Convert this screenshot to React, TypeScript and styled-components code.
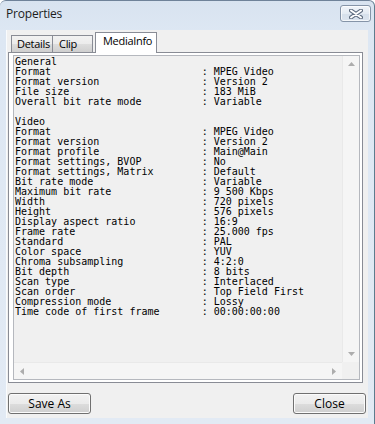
import React from "react";
import styled, { createGlobalStyle } from "styled-components";

const GlobalStyle = createGlobalStyle`
  html, body {
    margin: 0;
    padding: 0;
    background: #ffffff;
  }
  * {
    box-sizing: border-box;
  }
`;

const general: [string, string][] = [
  ["Format", "MPEG Video"],
  ["Format version", "Version 2"],
  ["File size", "183 MiB"],
  ["Overall bit rate mode", "Variable"],
];

const video: [string, string][] = [
  ["Format", "MPEG Video"],
  ["Format version", "Version 2"],
  ["Format profile", "Main@Main"],
  ["Format settings, BVOP", "No"],
  ["Format settings, Matrix", "Default"],
  ["Bit rate mode", "Variable"],
  ["Maximum bit rate", "9 500 Kbps"],
  ["Width", "720 pixels"],
  ["Height", "576 pixels"],
  ["Display aspect ratio", "16:9"],
  ["Frame rate", "25.000 fps"],
  ["Standard", "PAL"],
  ["Color space", "YUV"],
  ["Chroma subsampling", "4:2:0"],
  ["Bit depth", "8 bits"],
  ["Scan type", "Interlaced"],
  ["Scan order", "Top Field First"],
  ["Compression mode", "Lossy"],
  ["Time code of first frame", "00:00:00:00"],
];

// name column is padded to 31 chars like MediaInfo does
const row = ([k, v]: [string, string]) => k.padEnd(31, " ") + ": " + v;

const report = [
  "General",
  ...general.map(row),
  "",
  "Video",
  ...video.map(row),
].join("\n");

function Arrow({ dir }: { dir: "up" | "down" | "left" | "right" }) {
  const pts = {
    up: "0,4 3.5,0 7,4",
    down: "0,0 3.5,4 7,0",
    left: "4,0 0,3.5 4,7",
    right: "0,0 4,3.5 0,7",
  }[dir];
  const vertical = dir === "up" || dir === "down";
  return (
    <svg width={vertical ? 7 : 4} height={vertical ? 4 : 7}>
      <polygon points={pts} fill="#adadad" />
    </svg>
  );
}

function App() {
  return (
    <>
      <GlobalStyle />
      <Window>
        <TitleBar>
          <Title>Properties</Title>
          <CloseBox>
            <svg width="14" height="10" viewBox="0 0 14 10">
              <path d="M2 1.5 L12 8.5 M12 1.5 L2 8.5" stroke="#5f6d80" strokeWidth="4" strokeLinecap="round" />
              <path d="M2 1.5 L12 8.5 M12 1.5 L2 8.5" stroke="#ffffff" strokeWidth="2" strokeLinecap="round" />
            </svg>
          </CloseBox>
        </TitleBar>

        <Client>
          <TabStrip>
            <Tab $width={42}>Details</Tab>
            <Tab $width={40} $joined>
              Clip
            </Tab>
            <ActiveTab>MediaInfo</ActiveTab>
          </TabStrip>

          <Panel>
            <InfoBox>
              <InfoText>{report}</InfoText>
              <VScroll>
                <ScrollBtn>
                  <Arrow dir="up" />
                </ScrollBtn>
                <ScrollBtn>
                  <Arrow dir="down" />
                </ScrollBtn>
              </VScroll>
              <HScroll>
                <ScrollBtn>
                  <Arrow dir="left" />
                </ScrollBtn>
                <ScrollBtn>
                  <Arrow dir="right" />
                </ScrollBtn>
              </HScroll>
              <Corner />
            </InfoBox>
          </Panel>

          <ButtonRow>
            <PushButton $width={83}>Save As</PushButton>
            <PushButton $width={73}>Close</PushButton>
          </ButtonRow>
        </Client>
      </Window>
    </>
  );
}

const uiFont = `"Open Sans", "Noto Sans", "Liberation Sans", sans-serif`;

const Window = styled.div`
  width: 375px;
  height: 424px;
  display: flex;
  flex-direction: column;
  background: linear-gradient(#d8e3f0 0px, #dde7f3 30px, #e2eaf4 100%);
  border-top: 1px solid #6f8299;
  border-right: 1px solid #5d7c8e;
  border-top-left-radius: 6px;
  border-top-right-radius: 6px;
`;

const TitleBar = styled.div`
  height: 29px;
  flex: none;
  display: flex;
  justify-content: space-between;
  align-items: flex-start;
  padding: 0 3px 0 6px;
`;

const Title = styled.span`
  font-family: ${uiFont};
  font-size: 12px;
  letter-spacing: -0.2px;
  color: #1c1c1c;
  line-height: 16px;
  margin-top: 5px;
`;

const CloseBox = styled.div`
  width: 31px;
  height: 17px;
  margin-top: 4px;
  display: flex;
  align-items: center;
  justify-content: center;
  border: 1px solid #8594a8;
  border-radius: 3px;
  background: linear-gradient(#f1f5fa 0%, #e4ebf3 50%, #d6e0eb 51%, #dbe4ee 100%);
  box-shadow: inset 0 0 0 1px rgba(255, 255, 255, 0.7);
`;

const Client = styled.div`
  flex: none;
  height: 388px;
  margin: 0 6px 6px 6px;
  border-left: 1px solid #f9fbfd;
  background: #f0f0f0;
  display: flex;
  flex-direction: column;
  padding: 2px 2px 0 1px;
`;

const TabStrip = styled.div`
  height: 20px;
  display: flex;
  align-items: flex-end;
  padding-left: 3px;
  position: relative;
  z-index: 1;
`;

const Tab = styled.div<{ $width: number; $joined?: boolean }>`
  width: ${(p) => p.$width}px;
  height: 17px;
  padding-left: ${(p) => (p.$joined ? 6 : 5)}px;
  border: 1px solid #898c95;
  border-bottom: none;
  ${(p) => (p.$joined ? "border-left: none;" : "")}
  background: linear-gradient(#f2f2f2 0%, #ebebeb 50%, #dddddd 51%, #cfcfcf 100%);
  font-family: ${uiFont};
  font-size: 11px;
  letter-spacing: -0.3px;
  line-height: 15px;
  color: #000;
`;

const ActiveTab = styled.div`
  width: 62px;
  height: 21px;
  margin-left: 2px;
  margin-bottom: -1px;
  padding-left: 7px;
  border: 1px solid #898c95;
  border-bottom: none;
  background: #ffffff;
  font-family: ${uiFont};
  font-size: 11px;
  letter-spacing: -0.3px;
  line-height: 15px;
  color: #000;
`;

const Panel = styled.div`
  width: 355px;
  height: 331px;
  border: 1px solid #898c95;
  background: #ffffff;
  padding: 2px 2px 2px 4px;
`;

const InfoBox = styled.div`
  height: 100%;
  border: 1px solid #b5b8be;
  background: #f0f0f0;
  display: grid;
  grid-template-columns: 1fr 17px;
  grid-template-rows: 1fr 17px;
`;

const InfoText = styled.pre`
  margin: 0;
  padding: 1px 0 0 1px;
  overflow: hidden;
  font-family: "DejaVu Sans Mono", "Liberation Mono", monospace;
  font-size: 10px;
  line-height: 10px;
  color: #000;
  white-space: pre;
`;

const VScroll = styled.div`
  display: flex;
  flex-direction: column;
  justify-content: space-between;
  background: #f5f5f5;
  border-left: 1px solid #e9e9e9;
`;

const HScroll = styled.div`
  display: flex;
  justify-content: space-between;
  background: #f5f5f5;
  border-top: 1px solid #e9e9e9;
`;

const ScrollBtn = styled.div`
  width: 16px;
  height: 16px;
  display: flex;
  align-items: center;
  justify-content: center;
`;

const Corner = styled.div`
  background: #f0f0f0;
`;

const ButtonRow = styled.div`
  display: flex;
  justify-content: space-between;
  margin-top: 10px;
`;

const PushButton = styled.button<{ $width: number }>`
  width: ${(p) => p.$width}px;
  height: 21px;
  padding: 0;
  border: 1px solid #707070;
  border-radius: 3px;
  background: linear-gradient(#f2f2f2 0%, #ebebeb 50%, #dddddd 51%, #cfcfcf 100%);
  box-shadow: inset 0 0 0 1px #fbfbfb;
  font-family: ${uiFont};
  font-size: 12px;
  line-height: 18px;
  color: #000;
`;

export default App;
